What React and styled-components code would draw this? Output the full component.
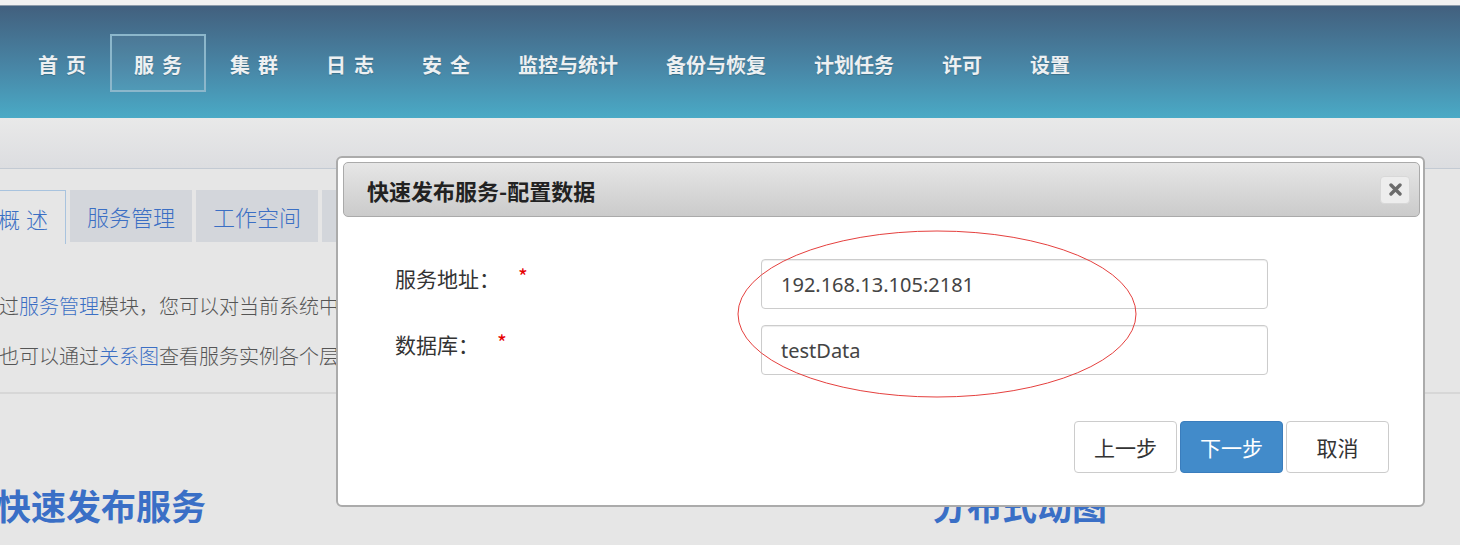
import React from "react";
import styled, { createGlobalStyle } from "styled-components";

const GlobalStyle = createGlobalStyle`
  body {
    margin: 0;
    background: #e6e6e6;
    font-family: "Noto Sans CJK SC", "Noto Sans", sans-serif;
    overflow: hidden;
  }
`;

const Page = styled.div`
  position: relative;
  height: 545px;
  overflow: hidden;
`;

const TopStrip = styled.div`
  height: 5px;
  background: #f2f2f2;
  border-bottom: 1px solid #8e9cab;
`;

const NavBar = styled.nav`
  height: 112px;
  display: flex;
  align-items: center;
  padding-left: 14px;
  background: linear-gradient(to bottom, #42607e 0%, #4886a6 55%, #4aaac6 100%);
`;

const NavItem = styled.div`
  height: 58px;
  box-sizing: border-box;
  padding: 3px 22px 0;
  margin-top: 1px;
  display: flex;
  align-items: center;
  border: 2px solid ${(p) => (p.$active ? "#8cb7cb" : "transparent")};
  background: ${(p) => (p.$active ? "rgba(255,255,255,0.04)" : "transparent")};
  color: #edf0f2;
  font-size: 20px;
  font-weight: 700;
  text-shadow: 0 1px 1px rgba(0, 0, 0, 0.2);
  white-space: nowrap;
`;

const Spaced = styled.span`
  letter-spacing: ${(p) => p.$gap}px;
  margin-right: -${(p) => p.$gap}px;
`;

const SubBar = styled.div`
  height: 50px;
  background: linear-gradient(to bottom, #e9e9e9, #dcdde0);
  border-bottom: 1px solid #c3cad3;
`;

const Main = styled.div`
  margin-left: -21px;
  padding-top: 21px;
`;

const Tabs = styled.div`
  display: flex;
  align-items: flex-start;
  gap: 4px;
  margin-left: 1px;
`;

const Tab = styled.div`
  height: ${(p) => (p.$active ? "54px" : "52px")};
  padding: 0 17px;
  box-sizing: border-box;
  display: flex;
  align-items: center;
  font-size: 22px;
  font-weight: 300;
  color: #3b6fc4;
  background: ${(p) => (p.$active ? "#e6e6e6" : "#d3d6db")};
  border: ${(p) => (p.$active ? "1px solid #a8c3de" : "none")};
  border-bottom: none;
  white-space: nowrap;
`;

const Intro = styled.div`
  padding-top: 37px;
  white-space: nowrap;
`;

const Line = styled.p`
  margin: 0;
  line-height: 50px;
  font-size: 20px;
  font-weight: 300;
  color: #555;
`;

const Link = styled.span`
  color: #3b6fc4;
`;

const Rule = styled.hr`
  margin: 11px 0 0;
  border: none;
  border-top: 2px solid #d7d7d7;
`;

const Sections = styled.div`
  display: grid;
  grid-template-columns: 936px 1fr;
  padding: 87px 0 0 17px;
`;

const SectionTitle = styled.h2`
  margin: 0;
  font-size: 35px;
  line-height: 48px;
  font-weight: 700;
  color: #3a6fc6;
  white-space: nowrap;
`;

const Modal = styled.div`
  position: absolute;
  left: 336px;
  top: 156px;
  width: 1089px;
  box-sizing: border-box;
  background: #fff;
  border: 2px solid #ababab;
  border-radius: 6px;
`;

const ModalHeader = styled.div`
  margin: 4px 3px 0 5px;
  height: 55px;
  box-sizing: border-box;
  display: flex;
  align-items: center;
  justify-content: space-between;
  padding: 0 9px 0 23px;
  border: 1px solid #aaaaaa;
  border-radius: 5px;
  background: linear-gradient(to bottom, #e6e6e6, #cbcbcb);
`;

const ModalTitle = styled.div`
  font-size: 22px;
  font-weight: 700;
  color: #222;
`;

const CloseButton = styled.div`
  width: 30px;
  height: 28px;
  box-sizing: border-box;
  display: flex;
  align-items: center;
  justify-content: center;
  background: #ededed;
  border: 1px solid #d8d8d8;
  border-radius: 4px;
`;

const Form = styled.div`
  display: grid;
  grid-template-columns: 366px 507px;
  row-gap: 16px;
  padding: 42px 0 0 57px;
`;

const Label = styled.div`
  padding-top: 4px;
  line-height: 26px;
  font-size: 21px;
  color: #333;
  white-space: nowrap;
`;

const Required = styled.span`
  margin-left: 18px;
  color: #e60000;
  font-size: 21px;
  vertical-align: 2px;
`;

const Input = styled.input`
  height: 50px;
  box-sizing: border-box;
  padding: 0 19px;
  border: 1px solid #cccccc;
  border-radius: 4px;
  box-shadow: inset 0 1px 1px rgba(0, 0, 0, 0.075);
  font-family: "Noto Sans", "Noto Sans CJK SC", sans-serif;
  font-size: 20px;
  color: #444;
  outline: none;
`;

const Footer = styled.div`
  display: flex;
  justify-content: flex-end;
  gap: 3px;
  padding: 46px 34px 32px 0;
`;

const Button = styled.button`
  width: 103px;
  height: 52px;
  border-radius: 4px;
  border: 1px solid ${(p) => (p.$primary ? "#3a7dbd" : "#cccccc")};
  background: ${(p) => (p.$primary ? "#428bca" : "#fff")};
  color: ${(p) => (p.$primary ? "#fff" : "#333")};
  font-family: "Noto Sans CJK SC", sans-serif;
  font-size: 21px;
  cursor: pointer;
`;

const Mark = styled.svg`
  position: absolute;
  left: 736px;
  top: 230px;
  pointer-events: none;
`;

const navItems = [
  { label: "首页", gap: 8 },
  { label: "服务", gap: 8, active: true },
  { label: "集群", gap: 8 },
  { label: "日志", gap: 8 },
  { label: "安全", gap: 8 },
  { label: "监控与统计" },
  { label: "备份与恢复" },
  { label: "计划任务" },
  { label: "许可" },
  { label: "设置" },
];

export default function App() {
  return (
    <Page>
      <GlobalStyle />
      <TopStrip />
      <NavBar>
        {navItems.map((item) => (
          <NavItem key={item.label} $active={item.active}>
            {item.gap ? <Spaced $gap={item.gap}>{item.label}</Spaced> : item.label}
          </NavItem>
        ))}
      </NavBar>
      <SubBar />
      <Main>
        <Tabs>
          <Tab $active>
            <Spaced $gap={6}>概述</Spaced>
          </Tab>
          <Tab>服务管理</Tab>
          <Tab>工作空间</Tab>
          <Tab>服务监控</Tab>
        </Tabs>
        <Intro>
          <Line>
            通过<Link>服务管理</Link>模块，您可以对当前系统中的服务进行发布、启动、停止、删除等操作。
          </Line>
          <Line>
            您也可以通过<Link>关系图</Link>查看服务实例各个层级之间的关系。
          </Line>
        </Intro>
        <Rule />
        <Sections>
          <SectionTitle>快速发布服务</SectionTitle>
          <SectionTitle>分布式动图</SectionTitle>
        </Sections>
      </Main>

      <Modal>
        <ModalHeader>
          <ModalTitle>快速发布服务-配置数据</ModalTitle>
          <CloseButton>
            <svg width="13" height="13" viewBox="0 0 13 13">
              <path d="M2 2 L11 11 M11 2 L2 11" stroke="#6b6b6b" strokeWidth="3.4" strokeLinecap="round" />
            </svg>
          </CloseButton>
        </ModalHeader>
        <Form>
          <Label>
            服务地址：<Required>*</Required>
          </Label>
          <Input defaultValue="192.168.13.105:2181" readOnly />
          <Label>
            数据库：<Required>*</Required>
          </Label>
          <Input defaultValue="testData" readOnly />
        </Form>
        <Footer>
          <Button>上一步</Button>
          <Button $primary>下一步</Button>
          <Button>取消</Button>
        </Footer>
      </Modal>

      <Mark width="404" height="172" viewBox="0 0 404 172">
        <ellipse cx="201" cy="84" rx="199" ry="83" fill="none" stroke="#e5403e" strokeWidth="1" />
      </Mark>
    </Page>
  );
}
